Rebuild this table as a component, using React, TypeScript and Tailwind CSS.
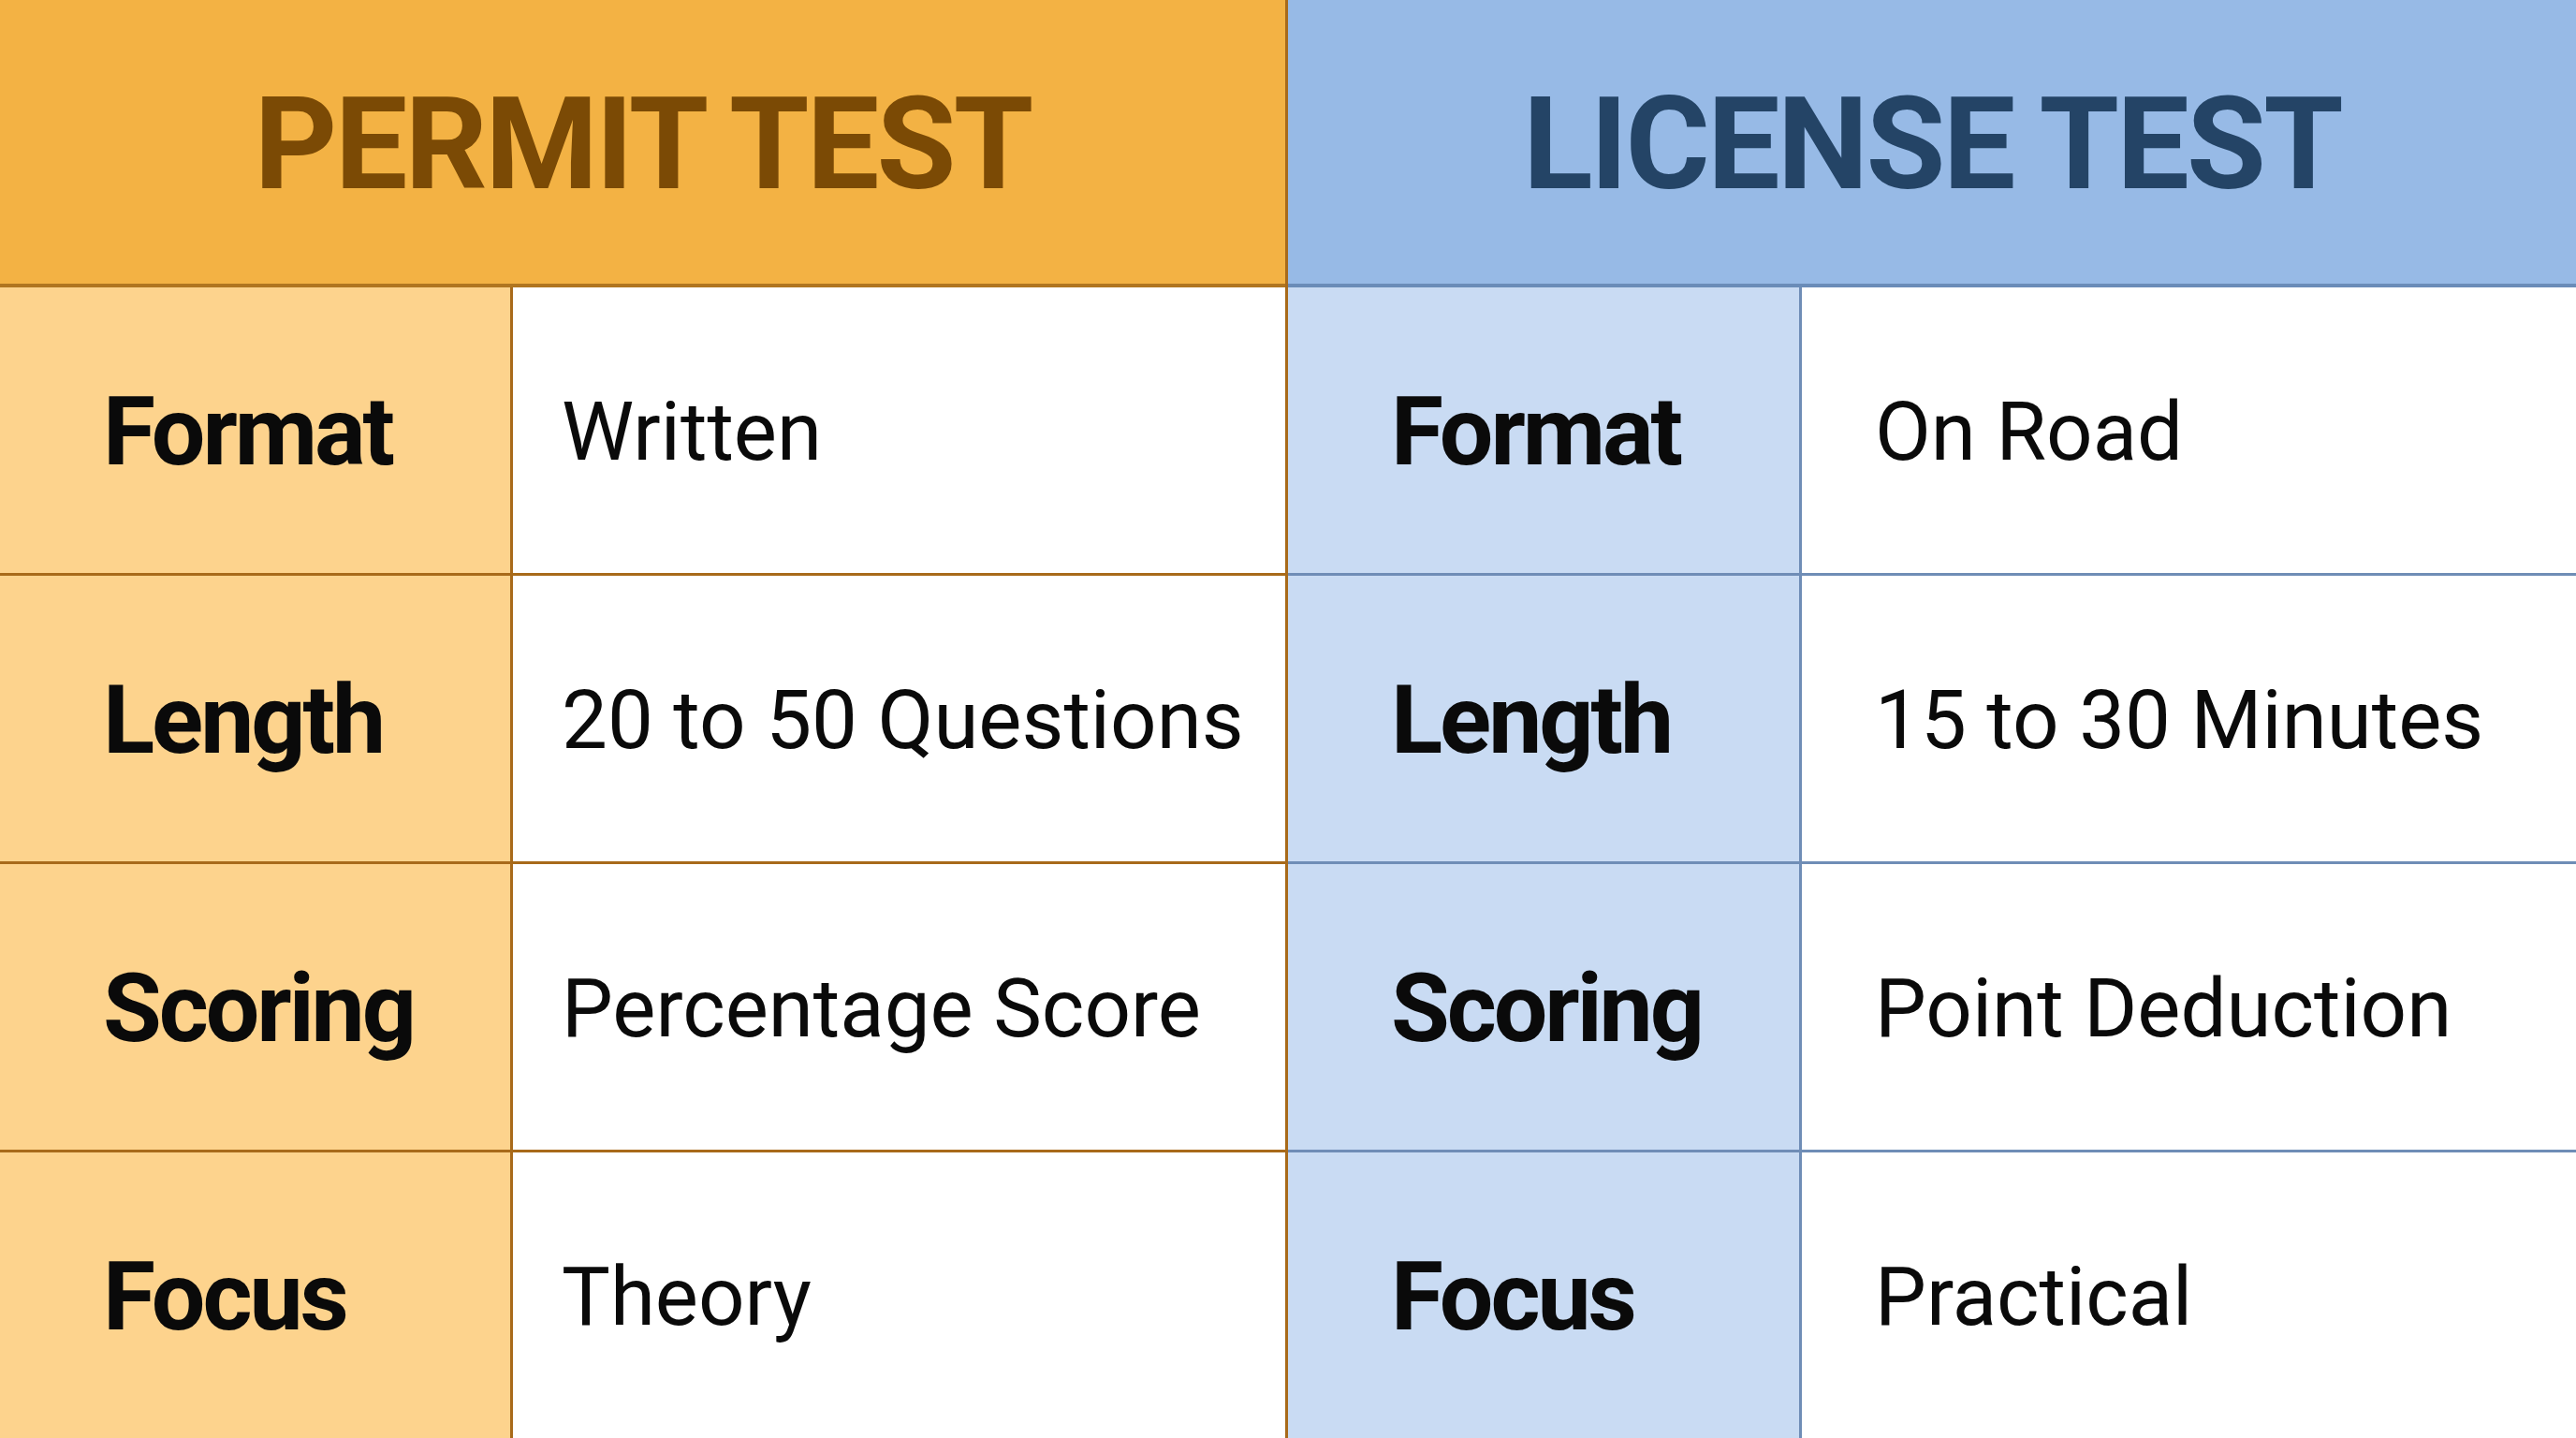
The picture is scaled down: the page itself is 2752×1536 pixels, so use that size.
import React from "react";

const labels = ["Format", "Length", "Scoring", "Focus"];

function HalfTable({
  title,
  values,
  variant,
}: {
  title: string;
  values: string[];
  variant: "permit" | "license";
}) {
  const permit = variant === "permit";
  return (
    <div
      className={
        permit
          ? "flex w-[1376px] flex-col border-r-[3px] border-[#A86A1A]"
          : "flex flex-1 flex-col"
      }
    >
      <div
        className={
          permit
            ? "flex h-[307px] shrink-0 items-center justify-center border-b-[4px] border-[#B07520] bg-[#F3B244]"
            : "flex h-[307px] shrink-0 items-center justify-center border-b-[4px] border-[#6A8CB8] bg-[#97BAE6]"
        }
      >
        <span
          className={
            permit
              ? "text-[138px] font-bold leading-none tracking-[-0.02em] text-[#7B4A05] pt-[4px]"
              : "text-[138px] font-bold leading-none tracking-[-0.02em] text-[#244466] pt-[4px]"
          }
        >
          {title}
        </span>
      </div>
      {labels.map((label, i) => (
        <div
          key={label}
          className={
            (permit ? "border-[#A86A1A] " : "border-[#6F8DB6] ") +
            (i < labels.length - 1
              ? "flex flex-1 border-b-[3px]"
              : "flex flex-1")
          }
        >
          <div
            className={
              permit
                ? "flex w-[548px] shrink-0 items-center border-r-[3px] border-[#A86A1A] bg-[#FDD38D] pl-[110px]"
                : "flex w-[549px] shrink-0 items-center border-r-[3px] border-[#6F8DB6] bg-[#C9DBF3] pl-[110px]"
            }
          >
            <span className="text-[102px] font-bold leading-none tracking-[-0.03em] text-[#0a0a0a] pt-[3px]">
              {label}
            </span>
          </div>
          <div
            className={
              permit
                ? "flex flex-1 items-center bg-white pl-[52px]"
                : "flex flex-1 items-center bg-white pl-[78px]"
            }
          >
            <span className="text-[87px] font-normal leading-none text-[#0a0a0a] pt-[3px]">
              {values[i]}
            </span>
          </div>
        </div>
      ))}
    </div>
  );
}

export default function App() {
  return (
    <div
      className="flex h-[1536px] w-[2752px] overflow-hidden bg-white"
      style={{ fontFamily: "Roboto, 'Liberation Sans', Arial, sans-serif" }}
    >
      <HalfTable
        title="PERMIT TEST"
        variant="permit"
        values={["Written", "20 to 50 Questions", "Percentage Score", "Theory"]}
      />
      <HalfTable
        title="LICENSE TEST"
        variant="license"
        values={["On Road", "15 to 30 Minutes", "Point Deduction", "Practical"]}
      />
    </div>
  );
}
